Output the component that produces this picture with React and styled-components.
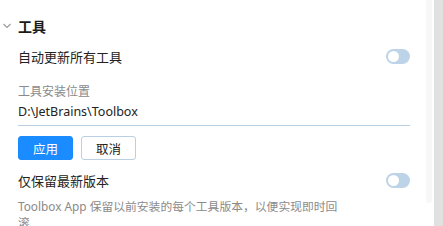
import styled, { createGlobalStyle } from 'styled-components'

const GlobalStyle = createGlobalStyle`
  html, body {
    margin: 0;
    padding: 0;
    background: #ffffff;
  }
  body {
    font-family: "Noto Sans", "Noto Sans CJK SC", sans-serif;
    color: #1f1f1f;
  }
`

const Page = styled.div`
  display: flex;
  width: 443px;
  height: 226px;
  overflow: hidden;
`

const Main = styled.div`
  flex: 1;
  padding: 16px 16px 0 18px;
  display: flex;
  flex-direction: column;
`

const Header = styled.div`
  position: relative;
  height: 20px;
  display: flex;
  align-items: center;
  font-size: 14px;
  font-weight: 600;
  color: #1a1a1a;
`

const Chevron = styled.svg`
  position: absolute;
  left: -15px;
  top: 7px;
`

const Row = styled.div`
  display: flex;
  align-items: center;
  justify-content: space-between;
  height: 20px;
  margin-top: ${p => p.$top}px;
  font-size: 13px;
  color: #222;
`

const Toggle = styled.div`
  width: 24px;
  height: 15px;
  border-radius: 8px;
  background: #bcd3e8;
  display: flex;
  align-items: center;
  padding-left: 2px;
  box-sizing: border-box;

  &::before {
    content: "";
    width: 11px;
    height: 11px;
    border-radius: 50%;
    background: #ffffff;
  }
`

const Label = styled.div`
  margin-top: 17px;
  font-size: 12px;
  line-height: 18px;
  color: #8a8a8a;
`

const PathField = styled.div`
  margin-top: 2px;
  padding-bottom: 4px;
  border-bottom: 1px solid #b9cfe3;
  font-size: 12.5px;
  line-height: 18px;
  color: #222;
`

const Buttons = styled.div`
  display: flex;
  gap: 8px;
  margin-top: 10px;
`

const Button = styled.button`
  width: 55px;
  height: 24px;
  border-radius: 3px;
  font-family: inherit;
  font-size: 12.5px;
  padding: 0;
  cursor: pointer;
  border: 1px solid ${p => (p.$primary ? '#1a8cff' : '#b9cfe3')};
  background: ${p => (p.$primary ? '#1a8cff' : '#ffffff')};
  color: ${p => (p.$primary ? '#ffffff' : '#222')};
`

const Desc = styled.div`
  margin-top: 8px;
  max-width: 328px;
  font-size: 11.8px;
  line-height: 16px;
  color: #8a8a8a;
`

const Track = styled.div`
  width: 6px;
  height: 203px;
  background: #f7f7f7;
  border-radius: 0 0 4px 4px;
  margin-right: 2px;
`

const Side = styled.div`
  width: 9px;
  background: #e1e1e1;
`

export default function App() {
  return (
    <>
      <GlobalStyle />
      <Page>
        <Main>
          <Header>
            <Chevron width="8" height="6" viewBox="0 0 8 6">
              <path d="M0.5 1 L4 4.5 L7.5 1" fill="none" stroke="#9a9a9a" strokeWidth="1.1" />
            </Chevron>
            工具
          </Header>
          <Row $top={11}>
            <span>自动更新所有工具</span>
            <Toggle />
          </Row>
          <Label>工具安装位置</Label>
          <PathField>D:\JetBrains\Toolbox</PathField>
          <Buttons>
            <Button $primary>应用</Button>
            <Button>取消</Button>
          </Buttons>
          <Row $top={11}>
            <span>仅保留最新版本</span>
            <Toggle />
          </Row>
          <Desc>Toolbox App 保留以前安装的每个工具版本，以便实现即时回滚</Desc>
        </Main>
        <Track />
        <Side />
      </Page>
    </>
  )
}
